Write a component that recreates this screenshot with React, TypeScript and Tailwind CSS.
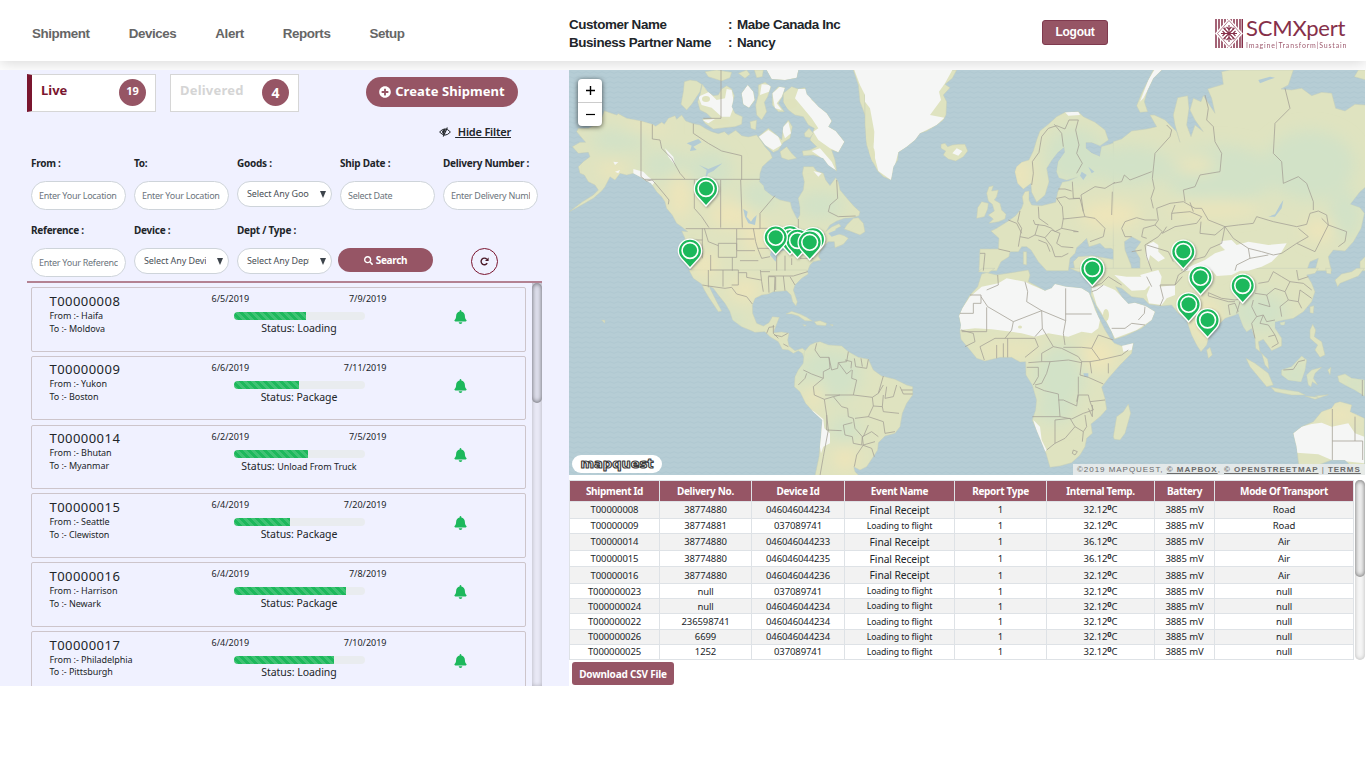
import React from "react";
import { FaPlusCircle, FaSearch, FaBell } from "react-icons/fa";

type Shipment = { id: string; from: string; to: string; start: string; end: string; pct: number; status: string; small?: boolean };

const shipments: Shipment[] = [
  { id: "T00000008", from: "Haifa", to: "Moldova", start: "6/5/2019", end: "7/9/2019", pct: 55, status: "Loading" },
  { id: "T00000009", from: "Yukon", to: "Boston", start: "6/6/2019", end: "7/11/2019", pct: 50, status: "Package" },
  { id: "T00000014", from: "Bhutan", to: "Myanmar", start: "6/2/2019", end: "7/5/2019", pct: 57, status: "Unload From Truck", small: true },
  { id: "T00000015", from: "Seattle", to: "Clewiston", start: "6/4/2019", end: "7/20/2019", pct: 43, status: "Package" },
  { id: "T00000016", from: "Harrison", to: "Newark", start: "6/4/2019", end: "7/8/2019", pct: 86, status: "Package" },
  { id: "T00000017", from: "Philadelphia", to: "Pittsburgh", start: "6/4/2019", end: "7/10/2019", pct: 77, status: "Loading" },
];

const columns = ["Shipment Id", "Delivery No.", "Device Id", "Event Name", "Report Type", "Internal Temp.", "Battery", "Mode Of Transport"];

const rows = [
  ["T00000008", "38774880", "046046044234", "Final Receipt", "1", "32.12", "3885 mV", "Road"],
  ["T00000009", "38774881", "037089741", "Loading to flight", "1", "32.12", "3885 mV", "Road"],
  ["T00000014", "38774880", "046046044233", "Final Receipt", "1", "36.12", "3885 mV", "Air"],
  ["T00000015", "38774880", "046046044235", "Final Receipt", "1", "36.12", "3885 mV", "Air"],
  ["T00000016", "38774880", "046046044236", "Final Receipt", "1", "32.12", "3885 mV", "Air"],
  ["T000000023", "null", "037089741", "Loading to flight", "1", "32.12", "3885 mV", "null"],
  ["T000000024", "null", "046046044234", "Loading to flight", "1", "32.12", "3885 mV", "null"],
  ["T000000022", "236598741", "046046044234", "Loading to flight", "1", "32.12", "3885 mV", "null"],
  ["T000000026", "6699", "046046044234", "Loading to flight", "1", "32.12", "3885 mV", "null"],
  ["T000000025", "1252", "037089741", "Loading to flight", "1", "32.12", "3885 mV", "null"],
];

const gridCols = "grid grid-cols-[90px_92px_93px_110px_92px_108px_60px_139px]";

/* Map sheets: each is drawn at three times the screen scale from its own origin. */
const sheetA = "translate(565 65) scale(.33333)";
const sheetB = "translate(865 65) scale(.33333)";
const sheetC = "translate(1115 65) scale(.33333)";
const sheetD = "translate(565 270) scale(.33333)";
const sheetE = "translate(945 270) scale(.33333)";

const land: [string, string][] = [
  [sheetA, "M118,137 130,142 155,150 160,146 185,160 228,168 262,178 272,184 290,172 298,178 310,160 330,152 335,163 350,150 362,168 385,176 405,180 420,190 440,200 460,206 478,200 490,210 512,196 530,212 550,216 575,210 590,230 600,245 615,262 622,278 608,290 592,305 585,325 583,350 595,362 598,375 620,392 645,405 676,412 680,430 690,450 697,463 705,450 705,425 700,400 715,375 718,350 712,325 716,305 745,305 755,318 775,325 782,345 795,362 812,338 820,352 825,375 850,405 868,425 885,440 882,452 862,458 838,460 815,468 795,480 782,500 800,486 822,476 828,484 812,492 815,505 838,512 850,520 835,538 810,548 808,530 790,530 775,545 765,560 760,575 768,585 745,590 735,600 728,617 380,617 375,605 362,580 355,545 360,520 350,498 368,500 350,485 335,475 322,450 305,430 300,410 290,395 275,380 258,355 240,345 225,335 205,325 185,330 165,325 150,345 135,335 120,365 110,378 85,400 50,420 13,440 50,412 85,390 100,375 90,360 70,350 58,330 45,325 40,305 55,290 75,275 70,262 40,265 22,245 45,232 62,232 50,218 35,200 40,190 70,190 95,178 110,160Z"],
  [sheetA, "M358,50 375,45 395,48 410,58 405,80 395,95 380,118 365,135 348,118 355,80Z"],
  [sheetA, "M412,58 428,80 445,92 460,90 470,72 485,62 500,72 508,92 500,125 510,145 532,155 530,178 510,185 478,188 445,192 420,175 412,162 440,160 425,145 405,135 398,110 405,90Z"],
  [sheetA, "M530,85 548,60 565,80 570,105 552,128 535,118ZM580,60 600,52 618,65 608,95 598,112 605,140 590,165 575,150 572,120 580,90ZM622,85 640,65 660,68 652,95 640,115 658,140 640,140 622,120ZM605,15 700,15 695,38 660,45 620,42ZM520,25 545,15 555,28 540,40ZM568,15 595,15 592,35 575,38ZM420,20 455,15 500,22 495,38 470,48 430,35Z"],
  [sheetA, "M655,85 680,65 700,72 720,68 725,88 745,108 760,125 785,145 800,168 790,185 812,198 838,230 820,262 800,255 810,285 815,318 790,300 775,280 745,270 715,272 712,258 735,255 755,245 735,225 748,190 730,180 715,155 690,150 670,135 655,110Z"],
  [sheetA, "M580,215 610,190 635,210 650,225 655,185 670,165 682,185 675,220 655,232 640,255 625,262 600,240ZM645,260 665,245 680,265 695,280 670,285 650,278ZM718,205 732,190 745,205 735,218 720,215ZM555,170 575,165 572,195 558,190Z"],
  [sheetA, "M845,480 865,460 880,458 895,475 900,500 885,510 860,500 838,492ZM865,15 900,15 900,150 885,110 880,60Z"],
  [sheetB, "M0,15 275,15 262,40 240,58 255,68 235,90 245,110 243,150 235,165 215,180 185,198 165,205 150,225 125,245 100,262 98,285 85,305 78,345 55,335 38,318 20,285 5,240 0,180Z"],
  [sheetB, "M228,238 240,235 248,245 262,240 280,238 300,238 308,258 295,275 272,288 250,282 235,270 242,258 228,250Z"],
  [sheetB, "M372,365 385,362 380,378 400,375 395,395 388,405 405,415 410,435 423,448 420,462 400,470 372,475 385,462 370,450 388,438 382,418 370,408 365,385ZM338,428 350,410 370,415 368,432 358,455 335,460Z"],
  [sheetB, "M450,320 455,305 470,292 492,285 505,258 515,225 525,198 550,178 575,155 600,142 640,140 655,155 690,172 720,195 730,225 705,242 680,232 662,232 662,250 680,265 705,275 710,245 735,238 755,230 755,617 755,560 738,550 720,550 705,535 690,540 672,545 665,520 650,535 635,548 630,565 615,580 610,617 545,617 520,590 498,555 485,545 470,545 460,560 435,560 432,575 408,590 395,617 342,617 345,552 400,552 402,520 378,498 395,490 430,468 452,452 470,430 475,415 472,395 480,380 492,378 492,405 500,420 530,422 572,412 578,382 592,352 612,348 640,335 605,345 582,338 575,320 580,290 600,262 598,245 578,262 560,285 545,310 552,350 540,390 515,412 500,382 498,355 475,372 458,355Z"],
  [sheetB, "M475,560 485,560 485,600 475,598ZM625,590 640,575 680,572 755,585 755,617 630,617Z"],
  [sheetC, "M-5,230 20,222 50,198 95,192 125,185 105,150 118,150 150,165 165,180 185,200 195,232 180,180 175,150 188,98 218,92 222,130 215,180 228,215 240,180 265,200 240,165 225,135 235,100 258,110 265,92 300,145 290,100 278,72 325,58 320,20 345,15 535,15 520,60 498,72 530,75 560,70 590,92 620,82 650,85 662,130 690,138 720,118 753,120 753,365 735,380 705,418 735,428 748,445 738,490 715,530 690,558 655,555 640,575 645,600 650,617 600,617 610,580 585,590 575,617 75,617 75,580 60,555 78,530 50,515 28,530 30,555 48,600 50,617 -5,617Z"],
  [sheetC, "M65,122 80,85 100,45 115,15 140,15 115,40 98,75 88,110 98,140 75,142ZM718,35 730,15 753,15 753,45ZM735,590 750,575 753,617 735,617Z"],
  [sheetD, "M372,0 385,25 410,42 418,60 430,80 440,95 460,125 470,123 455,95 440,65 432,48 445,55 460,75 480,100 495,125 503,150 530,170 570,187 600,185 615,200 640,215 652,238 670,240 685,250 700,242 712,250 718,265 725,245 712,235 690,242 672,228 668,210 672,190 650,186 625,188 632,170 643,142 622,140 612,158 595,168 575,160 563,130 562,105 570,85 590,75 610,72 625,65 665,62 678,75 683,95 693,108 697,95 685,60 690,45 710,25 730,12 725,0Z"],
  [sheetD, "M718,245 735,225 750,218 765,215 790,225 830,228 850,245 880,262 910,268 925,300 950,318 990,328 1025,345 1043,350 1043,375 1025,400 1012,430 1005,470 990,490 960,498 940,518 938,540 925,560 905,590 885,600 866,590 870,605 882,617 750,617 762,560 768,500 772,450 745,425 722,400 705,365 688,350 690,320 700,300 715,280Z"],
  [sheetD, "M663,132 680,124 705,132 725,142 742,153 720,152 700,138 680,132ZM748,155 765,152 785,160 782,167 755,165ZM713,164 724,165 720,169ZM795,164 804,164 804,168ZM110,150 120,151 119,160Z"],
  [sheetE, "M110,12 125,8 155,15 200,8 250,0 255,15 250,35 275,48 300,62 320,55 330,42 362,50 410,55 432,68 445,100 460,140 480,180 495,205 508,220 530,228 565,220 560,250 525,285 490,325 470,352 480,385 485,418 465,440 438,462 442,490 425,505 420,530 405,555 380,578 345,588 315,592 303,550 285,505 262,450 272,420 275,390 262,345 243,315 242,275 225,276 200,262 165,262 120,273 95,265 75,240 48,208 45,185 48,165 42,138 52,115 75,75 98,50Z"],
  [sheetE, "M100,5 112,-5 150,-5 130,8ZM505,500 515,440 535,425 550,402 557,430 540,490 525,510 508,508ZM785,240 795,232 802,255 790,265Z"],
  [sheetE, "M375,-5 400,5 440,10 440,50 438,75 455,110 480,150 500,185 508,208 540,198 590,175 620,150 630,125 602,108 570,98 550,102 530,80 512,50 530,55 560,80 595,85 612,103 650,108 680,105 700,130 725,150 740,195 755,225 768,245 785,225 792,195 810,175 840,145 870,135 880,130 895,170 905,185 920,175 930,205 932,235 950,250 960,285 972,298 968,268 945,245 940,215 955,208 980,242 1010,228 1010,205 990,175 990,155 1015,150 1045,145 1075,125 1100,95 1110,65 1100,40 1085,15 1110,10 1120,-5Z"],
  [sheetE, "M903,265 930,280 970,310 985,345 965,350 940,320 915,290ZM978,352 1010,358 1060,365 1080,375 1040,375 990,365ZM1010,300 1040,290 1070,258 1085,270 1080,300 1068,335 1030,330 1010,315ZM1085,315 1100,300 1130,292 1110,310 1105,325 1118,345 1102,335 1098,350 1090,345ZM1095,180 1103,163 1112,180 1108,200 1130,215 1140,255 1125,262 1110,240 1118,225 1095,205ZM1095,110 1107,107 1105,130 1095,128ZM1005,158 1020,155 1018,165 1008,165ZM1080,378 1120,382 1110,378 1150,374 1110,388ZM1178,318 1200,312 1220,325 1258,330 1258,378 1230,360 1200,345 1182,335ZM1148,300 1158,292 1155,315Z"],
  [sheetE, "M1045,490 1070,470 1105,455 1130,425 1160,415 1170,400 1185,395 1220,405 1215,425 1258,445 1258,617 1230,600 1200,570 1160,570 1120,585 1125,617 1065,617 1060,575 1055,530ZM1142,-5 1158,-5 1158,12 1145,10ZM1170,30 1190,12 1220,5 1235,-5 1258,-5 1240,18 1210,30 1185,40 1178,50Z"],
];

const snow: [string, string][] = [
  [sheetB, "M0,15 262,15 240,55 222,80 228,105 195,150 238,158 215,180 165,205 150,225 125,245 100,262 90,300 78,345 40,318 25,260 28,200 15,130 0,110Z"],
  [sheetA, "M868,15 900,15 900,90 885,60ZM605,15 700,15 695,38 660,45 620,42ZM412,58 430,82 400,95 410,120 440,128 470,155 495,155 508,120 500,75 485,72 480,100 455,105 440,90ZM530,85 548,60 565,80 568,105 552,128 535,118ZM590,58 618,60 612,80 585,90ZM622,85 645,65 660,68 650,95 635,115 650,135 630,130ZM700,72 722,72 740,105 785,145 800,168 790,185 812,198 838,230 820,262 795,250 760,225 745,200 760,190 740,160 715,130 690,100ZM582,215 610,195 640,215 650,240 625,255 600,240ZM650,190 670,170 678,205 660,220ZM740,258 765,250 800,290 812,315 785,300 765,275ZM412,165 450,162 430,175ZM205,312 235,320 250,335 270,350 260,362 235,340 205,330ZM300,250 325,275 330,300 310,275ZM745,318 770,325 760,335ZM145,290 160,292 150,300ZM150,320 165,315 160,325Z"],
  [sheetC, "M75,110 100,45 118,15 140,15 115,40 98,75 85,100ZM95,540 115,530 130,540 130,560 150,580 130,590 105,570 100,595 92,570ZM320,528 350,525 365,540 400,530 460,540 515,535 500,560 470,590 440,605 400,617 200,617 235,600 270,585 300,565 330,555 315,540Z"],
  [sheetB, "M262,265 275,250 292,258 280,272ZM600,142 640,140 645,150 610,152Z"],
  [sheetE, "M75,80 110,50 160,40 185,25 240,35 260,45 300,62 330,42 410,55 432,68 450,120 465,150 460,175 440,190 410,185 370,200 310,190 270,200 230,190 200,185 140,178 90,175 45,180 48,160 42,138 52,115ZM440,55 475,45 510,60 540,90 570,98 602,108 630,125 620,150 575,180 510,205 500,185 480,145 455,105ZM508,15 545,20 600,20 615,45 600,60 560,62 535,40ZM585,15 640,0 650,20 645,50 690,45 690,75 665,85 650,105 612,100 605,75 615,50ZM800,0 850,-5 900,-5 860,15 815,18ZM530,222 565,218 560,240 535,245ZM265,450 285,470 290,510 305,540 300,545 280,500ZM1045,490 1070,470 1100,462 1130,458 1160,470 1210,460 1230,490 1258,500 1258,580 1215,575 1160,570 1120,553 1055,548Z"],
  [sheetD, "M724,410 748,425 775,448 778,475 795,490 795,520 775,530 768,550 764,525 770,455ZM1185,140 1200,110 1200,170 1187,170Z"],
];

const water: [string, string][] = [
  [sheetA, "M365,235 400,222 410,232 385,245 395,255 375,258 380,242ZM402,300 430,312 472,295 445,318 430,325 420,345 425,315ZM535,432 548,440 545,455 558,470 565,460 575,450 570,480 550,475 540,455ZM615,570 622,545 640,540 660,545 660,555 640,560 632,590ZM790,505 830,488 845,500 800,515Z"],
  [sheetC, "M460,455 480,448 495,420 505,405 500,430 480,455ZM430,45 465,35 480,38 460,45 435,55Z"],
  [sheetB, "M650,320 665,330 655,345 645,332ZM670,305 688,320 680,325Z"],
  [sheetE, "M415,310 430,310 430,322 418,320Z"],
];

const borders: [string, string][] = [
  [sheetA, "M228,168V335L245,348 262,345 275,360 300,390 312,405 310,418M262,178V222L285,225 290,250 320,280 345,325 360,342M240,343H585M385,176V205L430,235 470,258 530,272 530,345M388,343V430L410,455 432,488M467,345V488M527,345 532,488M362,491H585V445L630,392M412,490V525H365M418,490 430,530 460,542M460,535H515V577H460ZM515,492V555M515,522H568M515,557H570M565,490 572,530 578,550H620M437,617V570M412,525V580M502,577V617M525,587H580M468,15V160H415M585,490H605L690,500 720,520 780,508M578,550 590,580 615,575M635,575V617M660,572V617M680,580V600M705,580 745,580M815,345 818,400 795,420 790,440 820,455 872,453M700,462V495"],
  [sheetB, "M500,360 505,325 502,290 522,262 530,215 550,190 575,182 600,192 612,165 640,165 632,195 642,240 635,265 652,295 635,325M568,178 590,205 595,245M622,350 625,400 645,400 655,440 660,455 595,462 592,425 575,400 600,395 612,402 645,400M595,460 590,490 570,500 560,490 540,482 510,478 505,465M520,425 522,460 550,480M590,490 640,500 625,500M465,438 458,470 470,490 465,515 460,545M430,465 455,475 470,505M465,515 490,520 510,510 520,478M510,510 540,518 560,495 585,505 575,535 590,545 625,548M540,518 560,545 570,575 590,575 610,565M520,525 545,535 555,560M400,552 435,560M345,565 360,565 355,617M660,455 690,460 720,490 715,515 675,530M648,390 690,365 720,370 750,352M742,380 740,450M655,440 648,390M580,372 600,372 620,378"],
  [sheetC, "M110,617 95,575 90,540 130,515 142,500 120,480 130,465 125,430 165,415 205,410 240,430 260,430 280,465 330,485 370,480 415,475 425,455 475,470 545,485 575,478 585,445 610,438 635,450 640,480 695,500 690,530 670,545M330,485 355,520 400,550 440,560 475,570 500,565 545,535 580,515 550,490M20,490 30,470 65,458 90,465 125,465M20,490 30,515 50,515M120,480 85,490 80,515 95,520M142,505 180,485 245,475 260,455 225,440 170,445 170,465M225,412 235,440M170,445 180,420M258,470 255,505 300,510 330,485M155,485 142,505M330,485 320,535 285,550 270,575 215,590 200,617M95,540 160,560M50,560 80,555M160,560 175,590M400,550 405,580 365,600 360,617M405,580 460,570M115,430 108,400 118,370 112,340 120,265 165,215 170,195 155,180M-5,355 20,350 28,330 45,345 110,320M270,90 280,130 275,165 295,185 300,230 320,265 315,320 255,330 240,365 205,375 210,410M510,70 525,130 480,175 475,265 500,290 505,355 550,335 575,355 595,410 595,435M620,460 640,480M545,535 600,560 640,480"],
  [sheetD, "M412,45 430,48 480,55 500,52 515,72 545,80 562,102M430,0V52M474,0V50M435,0H520V45H500M520,8 545,8V22L588,30M586,0 590,35 595,65M612,68 610,20 630,20 628,65M632,20V60M655,18 660,62M675,20 690,45M610,18 685,18 728,5M588,5H615M605,190 612,172 628,170M625,165V190L640,205M628,195 650,200 668,190M655,222 670,230M755,220 750,240 765,262 792,262 795,295 775,305 775,325 740,312 715,300M792,262 800,300 818,295 820,278 845,275 850,245M840,270 860,275 858,295M868,265 872,290 905,295M888,265 892,290M910,268 905,295M700,345 720,325 725,310M775,325 745,350 748,375 778,388 805,380 825,375M778,388 785,435 790,480 775,560 765,617M785,435 785,480 830,482M805,380 830,410 848,415 850,440 865,445 870,475 892,500 890,525 865,520 862,500 840,495 835,465 862,458M862,300 860,325 875,330 865,375 922,382 940,370 955,318M820,278 845,312 860,300M780,375 865,375M922,382 925,408 952,410 955,375M940,370 955,345M952,410 955,425 1002,430M925,408 910,440 955,455M910,440 870,445M955,455 960,490 990,485M910,465 895,500M965,350 960,385 985,380 995,345M1005,350 1015,372 1043,372M1010,360H1043M892,500 920,485 940,500M895,525 875,555 868,590M892,525 920,535 928,560M892,500 895,525 930,515"],
  [sheetE, "M75,75H108V100H85V130H45M108,80 128,110 205,155 290,122 245,95 248,65 240,35M125,112V185H50M290,122 362,152V55M362,132H440M158,15 160,45 125,60M205,155 200,180 180,205 150,205 105,230M290,122 292,175 270,200M362,152 355,190 360,225M48,180 85,190 90,215 60,230M105,230 118,270M155,225V265M175,220V262M188,205V262M180,205H270L280,230 240,262M292,175 325,230 290,250 290,275 250,278M325,230 350,235 400,260 410,275M355,232 410,232 440,235 460,195 505,210M440,235 465,270 530,255 550,240M465,270 435,275 410,275 405,315 430,322 475,342M435,275 440,310M490,280V310M290,275 315,275 305,310 290,340 270,345M315,275 370,270 410,278M400,320 400,370 395,395M245,292H280V320L265,345M270,350 298,362 340,372 345,440 262,440M340,390H355L395,408 400,375 430,375 435,395 480,390M345,440 380,447 415,430 445,420 435,395M330,450V520L305,540M330,450 375,445 390,470 360,505 330,520M390,470 415,485 425,470 420,435M415,485 412,515M442,405V440L430,415M382,550 385,540 397,545 390,555ZM440,52 470,40 490,20 530,45M440,65 455,60 475,45M500,175 540,175 560,160 600,165M600,110 598,130 580,150M605,20 620,50M645,45 690,45 700,15 730,-5M645,45 655,85 645,108M690,45 712,20M790,68 830,85 870,90 890,85M790,68V78L850,95 870,95M850,105 870,100 880,125M850,105 855,135M885,95 875,130M925,90 920,110 935,140 955,135 965,155 990,150M935,140 920,160 930,205M955,135 945,160 970,165 990,195 970,200M990,195 1000,220 980,232M1015,300 1045,298 1060,275 1080,270M1162,417V570M1230,440V513M1162,513H1253V570M1252,330V378"],
  [sheetE, "M930,70 965,75 990,55 1020,65 1030,90 1060,95 1070,115M940,40 970,35 985,5M1020,65 1035,35 1075,40 1100,60M1030,90 1005,110 1010,140M1055,0 1060,30 1090,20M965,75 975,110 940,100M985,5 1010,20 1035,35M1060,95 1065,60 1100,85"],
];

const pins: [number, number][] = [
  [706, 188.5], [690, 250.5], [790, 237], [813, 239], [797.5, 240.5], [775.7, 237.3], [809.7, 242.3],
  [1092.3, 268.5], [1183.3, 251.5], [1200.5, 277.3], [1242.7, 285.5], [1188.6, 304.3], [1207.6, 320],
];

function WorldMap() {
  return (
    <svg className="block h-full w-full" viewBox="569 70 796 405" preserveAspectRatio="none">
      <defs>
        <pattern id="waves" width="8" height="5" patternUnits="userSpaceOnUse">
          <rect width="8" height="5" fill="#b6cdd5" />
          <path d="M0,2.5Q2,1 4,2.5T8,2.5" fill="none" stroke="#b0c8d2" strokeWidth="1" />
        </pattern>
        <clipPath id="landClip">
          {land.map(([t, d], i) => <path key={i} transform={t} d={d} />)}
        </clipPath>
        <filter id="soft" x="-10%" y="-10%" width="120%" height="120%"><feGaussianBlur stdDeviation="8" /></filter>
        <filter id="pinShadow" x="-10%" y="-10%" width="120%" height="120%"><feDropShadow dx="1" dy="1" stdDeviation="1.2" floodColor="#555" floodOpacity=".55" /></filter>
      </defs>
      <rect x="569" y="70" width="796" height="405" fill="url(#waves)" />
      <g fill="#dfe3c0" stroke="#c6cfb8" strokeWidth="1.5">{land.map(([t, d], i) => <path key={i} transform={t} d={d} />)}</g>
      <g clipPath="url(#landClip)">
        <g filter="url(#soft)">
          <g fill="#d2e2c7">
            <ellipse cx="620" cy="140" rx="30" ry="12" /><ellipse cx="665" cy="165" rx="25" ry="14" />
            <ellipse cx="710" cy="170" rx="22" ry="20" /><ellipse cx="760" cy="195" rx="20" ry="14" />
            <ellipse cx="820" cy="205" rx="25" ry="14" /><ellipse cx="830" cy="375" rx="32" ry="26" />
            <ellipse cx="845" cy="430" rx="16" ry="14" /><ellipse cx="1060" cy="375" rx="26" ry="30" />
            <ellipse cx="1055" cy="410" rx="20" ry="14" /><ellipse cx="1075" cy="155" rx="30" ry="28" />
            <ellipse cx="1130" cy="165" rx="40" ry="20" /><ellipse cx="1220" cy="175" rx="55" ry="30" />
            <ellipse cx="1310" cy="165" rx="45" ry="35" /><ellipse cx="1345" cy="215" rx="16" ry="25" />
            <ellipse cx="1260" cy="312" rx="28" ry="20" /><ellipse cx="1295" cy="375" rx="14" ry="14" />
            <ellipse cx="730" cy="322" rx="12" ry="8" /><ellipse cx="1355" cy="385" rx="12" ry="10" />
          </g>
          <g fill="#efe5b9">
            <ellipse cx="645" cy="127" rx="24" ry="4" /><ellipse cx="612" cy="170" rx="14" ry="6" />
            <ellipse cx="680" cy="195" rx="10" ry="24" /><ellipse cx="730" cy="215" rx="20" ry="12" />
            <ellipse cx="755" cy="235" rx="10" ry="18" /><ellipse cx="705" cy="265" rx="12" ry="12" />
            <ellipse cx="745" cy="290" rx="15" ry="10" /><ellipse cx="1110" cy="215" rx="30" ry="12" />
            <ellipse cx="1020" cy="175" rx="9" ry="16" /><ellipse cx="1195" cy="165" rx="20" ry="7" />
            <ellipse cx="1215" cy="208" rx="45" ry="7" /><ellipse cx="1098" cy="355" rx="18" ry="16" />
            <ellipse cx="1205" cy="320" rx="14" ry="20" /><ellipse cx="1320" cy="230" rx="16" ry="10" />
            <ellipse cx="1010" cy="350" rx="35" ry="5" /><ellipse cx="1340" cy="415" rx="20" ry="8" />
            <ellipse cx="815" cy="395" rx="8" ry="14" /><ellipse cx="845" cy="458" rx="12" ry="12" />
          </g>
        </g>
        <g fill="#f5f6f5">{snow.map(([t, d], i) => <path key={i} transform={t} d={d} />)}</g>
        <g fill="#dfe2bd">
          <ellipse cx="790" cy="104" rx="7" ry="5" /><ellipse cx="706" cy="99" rx="4" ry="3" /><ellipse cx="721" cy="122" rx="9" ry="3" />
          <ellipse cx="870" cy="137" rx="4" ry="10" /><ellipse cx="872" cy="155" rx="3" ry="8" /><ellipse cx="1020" cy="327" rx="2" ry="1.5" /><ellipse cx="1106" cy="315" rx="3" ry="6" />
        </g>
      </g>
      <g fill="#b3cbd4">{water.map(([t, d], i) => <path key={i} transform={t} d={d} />)}</g>
      <g fill="none" stroke="#a6a297" strokeWidth="0.8" strokeLinejoin="round">
        {borders.map(([t, d], i) => <path key={i} transform={t} d={d} vectorEffect="non-scaling-stroke" />)}
      </g>
      <g filter="url(#pinShadow)">
        {pins.map(([x, y], i) => (
          <g key={i} transform={`translate(${x} ${y})`}>
            <path d="M0,17.5 -8.4,8.2A11.6,11.6 0 1 1 8.4,8.2Z" fill="#1db85c" stroke="#fff" strokeWidth="1.3" />
            <circle r="7.9" fill="#1db85c" stroke="#fff" strokeWidth="1.6" />
          </g>
        ))}
      </g>
    </svg>
  );
}

function Logo() {
  return (
    <div className="flex items-start gap-[3px] text-[#86304a]">
      <svg className="mt-[1px] h-[29px] w-[28px]" viewBox="0 0 28 29">
        <g stroke="#86304a" strokeWidth="1.5">
          {[1, 4, 7, 10, 13, 16, 19, 22, 25, 27.3].map((x) => <path key={x} d={`M${x},0V29`} />)}
        </g>
        <path d="M14,-1 28,14.5 14,30 0,14.5Z" fill="#fff" />
        <path d="M14,1.5 25.5,14.5 14,27.5 2.5,14.5Z" fill="none" stroke="#86304a" strokeWidth=".6" />
        <g fill="none" stroke="#86304a" strokeWidth="1.1">
          <path d="M14,6V23M6,14.5H22M8.5,9 19.5,20M19.5,9 8.5,20" />
          <path d="M11.5,8 14,10.5 16.5,8M11.5,21 14,18.5 16.5,21M7.5,12 10,14.5 7.5,17M20.5,12 18,14.5 20.5,17" />
          <path d="M10,10.5V8.5M18,10.5V8.5M10,18.5V20.5M18,18.5V20.5" />
        </g>
      </svg>
      <div className="font-['Lato']">
        <div className="h-[23px] text-[22px] leading-[20px] tracking-[-0.22px]">SCMXpert</div>
        <div className="h-[8px] text-[7px] leading-[8px] tracking-[0.82px] whitespace-nowrap opacity-80">Imagine|Transform|Sustain</div>
      </div>
    </div>
  );
}

function Field({ label, text, select }: { label: string; text: string; select?: boolean }) {
  return (
    <div className="w-[95px]">
      <div className="h-[26px] pt-[1px] text-[10px] leading-[15px] font-bold tracking-[-0.25px] whitespace-nowrap text-[#212529]">{label}</div>
      {select ? (
        <div className="flex h-[26px] items-center rounded-full border border-[#ced4da] bg-white pr-[5px] pl-[9px] text-[9px] tracking-[-0.1px] text-[#495057]">
          <span className="w-[62px] overflow-hidden whitespace-nowrap">{text}</span>
          <svg className="ml-auto h-[7px] w-[6px]" viewBox="0 0 6 7"><path d="M0,0H6L3,7Z" fill="#3d444b" /></svg>
        </div>
      ) : (
        <div className="flex h-[29px] items-center rounded-full border border-[#ced4da] bg-white px-[7px] text-[9px] tracking-[-0.27px] text-[#6c757d]">
          <span className="w-full overflow-hidden whitespace-nowrap">{text}</span>
        </div>
      )}
    </div>
  );
}

function ShipmentCard({ s }: { s: Shipment }) {
  return (
    <div className="flex h-[64.5px] w-[495px] shrink-0 rounded-[2px] border border-[#cdc5cb] pl-[17.5px]">
      <div className="w-[162px] shrink-0 pt-[3.6px] text-[#212529]">
        <div className="text-[13px] leading-[18px] tracking-[0.45px]">{s.id}</div>
        <div className="text-[9px] leading-[12.9px] tracking-[-0.06px]">From :- {s.from}</div>
        <div className="text-[9px] leading-[12.9px] tracking-[-0.06px]">To :- {s.to}</div>
      </div>
      <div className="w-[175px] shrink-0 pt-[5px]">
        <div className="flex justify-between text-[9px] leading-[12px]"><span>{s.start}</span><span>{s.end}</span></div>
        <div className="mt-[7px] ml-[22px] h-[8px] w-[131px] overflow-hidden rounded-full bg-[#e9ecef]">
          <div className="h-full bg-[#1db85c] bg-[linear-gradient(45deg,rgba(255,255,255,.15)_25%,transparent_25%,transparent_50%,rgba(255,255,255,.15)_50%,rgba(255,255,255,.15)_75%,transparent_75%,transparent)] bg-[length:8px_8px]" style={{ width: `${s.pct}%` }} />
        </div>
        <div className="text-center text-[10.5px] leading-[17px] tracking-[-0.05px] whitespace-nowrap">Status: <span className={s.small ? "text-[9px]" : ""}>{s.status}</span></div>
      </div>
      <div className="pt-[22px] pl-[67.5px]"><FaBell className="h-[14px] w-[13px] text-[#1db85c]" /></div>
    </div>
  );
}

export default function App() {
  return (
    <div className="h-[768px] w-[1366px] overflow-hidden bg-white font-['Noto_Sans',sans-serif] text-[#212529]">
      <header className="relative flex h-[61px] bg-white font-['Liberation_Sans',sans-serif] shadow-[0_2px_14px_rgba(0,0,0,0.16)]">
        <nav className="flex w-[569px] gap-[39px] pt-[25px] pl-[32px] text-[13.4px] leading-[18px] font-bold tracking-[-0.42px] text-[#666]">
          {["Shipment", "Devices", "Alert", "Reports", "Setup"].map((n) => <span key={n}>{n}</span>)}
        </nav>
        <div className="grid w-[473px] grid-cols-[159px_9px_1fr] content-start pt-[16px] text-[13.4px] leading-[18px] font-bold tracking-[-0.4px] whitespace-nowrap">
          <span>Customer Name</span><span>:</span><span>Mabe Canada Inc</span>
          <span>Business Partner Name</span><span>:</span><span>Nancy</span>
        </div>
        <div className="w-[173px] pt-[20px]">
          <div className="flex h-[25px] w-[66px] items-center justify-center rounded-[3px] border border-[#7f3a4e] bg-[#965565] pb-[1px] text-[12px] font-bold tracking-[-0.3px] text-white">Logout</div>
        </div>
        <div className="pt-[18px]"><Logo /></div>
      </header>
      <main className="relative mt-[9px] flex">
        <section className="h-[616px] w-[569px] overflow-hidden bg-[#f0f1ff] pl-[27px]">
          <div className="flex pt-[4px]">
            <div className="flex h-[38px] w-[129px] justify-between border border-l-[5px] border-[#d6d6d6] border-l-[#7a152f] bg-white pr-[9px] pl-[9px]">
              <span className="pt-[5px] text-[13px] leading-[20px] font-bold text-[#7a152f]">Live</span>
              <span className="mt-[4px] flex h-[27px] w-[27px] items-center justify-center rounded-full bg-[#965565] pb-[2px] text-[11px] font-bold text-white">19</span>
            </div>
            <div className="ml-[14px] flex h-[38px] w-[129px] justify-between border border-[#d6d6d6] bg-white pr-[9px] pl-[9px]">
              <span className="pt-[5px] text-[13px] leading-[20px] font-bold tracking-[0.2px] text-[#d5d5d5]">Delivered</span>
              <span className="mt-[4px] flex h-[27px] w-[27px] items-center justify-center rounded-full bg-[#965565] text-[14px] font-bold text-white">4</span>
            </div>
            <div className="mt-[3px] ml-[67px] flex h-[30px] w-[152px] items-center justify-center gap-[4px] rounded-full bg-[#965565] text-[13px] font-bold tracking-[0.08px] whitespace-nowrap text-white">
              <FaPlusCircle className="h-[12px] w-[12px]" />Create Shipment
            </div>
          </div>
          <div className="mt-[12px] flex h-[16px] w-[484px] items-center justify-end gap-[4px] text-[11px] font-semibold tracking-[-0.2px] whitespace-pre">
            <svg className="h-[10px] w-[12px]" viewBox="0 0 12 10" fill="none" stroke="#212529">
              <path d="M.6,5Q6,-1.2 11.4,5Q6,11.2 .6,5Z" strokeWidth="1" />
              <path d="M6.2,2.4A2.6,2.6 0 0 0 4.4,7Z" fill="#212529" strokeWidth=".8" />
              <path d="M8.4,.6 4.2,9.4" strokeWidth="1.1" />
            </svg>
            <span className="underline"> Hide Filter</span>
          </div>
          <div className="mt-[15px] ml-[4px] flex gap-[8px]">
            <Field label="From :" text="Enter Your Location" />
            <Field label="To:" text="Enter Your Location" />
            <Field label="Goods :" text="Select Any Goods" select />
            <Field label="Ship Date :" text="Select Date" />
            <Field label="Delivery Number :" text="Enter Delivery Number" />
          </div>
          <div className="mt-[12px] ml-[4px] flex h-[59px] gap-[8px]">
            <Field label="Reference :" text="Enter Your Reference" />
            <Field label="Device :" text="Select Any Device" select />
            <Field label="Dept / Type :" text="Select Any Dept" select />
            <div className="mt-[26px] -ml-[2px] flex h-[24px] w-[95px] items-center justify-center gap-[3px] rounded-full bg-[#965565] text-[10px] font-bold tracking-[-0.35px] text-white">
              <FaSearch className="h-[9px] w-[9px]" />Search
            </div>
            <div className="mt-[26px] ml-[30px] flex h-[27px] w-[27px] items-center justify-center rounded-full border border-[#7a152f]">
              <svg className="h-[9px] w-[9px]" viewBox="0 0 9 9">
                <path d="M7.2,6.2A3.3,3.3 0 1 1 6.8,2.2" fill="none" stroke="#4a1a28" strokeWidth="1.4" />
                <path d="M8.6,.4V4H5Z" fill="#4a1a28" />
              </svg>
            </div>
          </div>
          <div className="h-[2px] w-[515px] bg-[#b38292]" />
          <div className="flex h-[403px] w-[515px] justify-between overflow-hidden">
            <div className="flex flex-col gap-[4.3px] pt-[4px] pl-[4px]">
              {shipments.map((s) => <ShipmentCard key={s.id} s={s} />)}
            </div>
            <div className="h-full w-[10px] bg-[#e9e9f6] shadow-[inset_0_0_4px_rgba(0,0,0,0.25)]">
              <div className="h-[120px] w-[10px] rounded-[5px] bg-[#e0e1ee] shadow-[inset_0_0_5px_rgba(0,0,0,0.6)]" />
            </div>
          </div>
        </section>
        <section className="w-[797px]">
          <div className="relative h-[405px] w-[796px] overflow-hidden">
            <WorldMap />
            <div className="absolute top-[9px] left-[9px] w-[24px] rounded-[4px] bg-white shadow-[0_1px_5px_rgba(0,0,0,0.65)]">
              <div className="flex h-[24px] items-center justify-center border-b border-[#ccc]"><svg width="9" height="9" viewBox="0 0 9 9"><path d="M0,4.5H9M4.5,0V9" stroke="#000" strokeWidth="1.4" /></svg></div>
              <div className="flex h-[23px] items-center justify-center"><svg width="9" height="9" viewBox="0 0 9 9"><path d="M0,4.5H9" stroke="#000" strokeWidth="1.2" /></svg></div>
            </div>
            <div className="absolute bottom-[2px] left-[3px] flex h-[18px] w-[90px] items-center justify-center rounded-full bg-white">
              <svg width="78" height="17" viewBox="0 0 78 17">
                <text x="2.5" y="11.5" textLength="73" lengthAdjust="spacingAndGlyphs" fontFamily="DejaVu Sans" fontWeight="bold" fontSize="12" fill="#fff" stroke="#3a3a3a" strokeWidth="1.1" strokeLinejoin="round">mapquest</text>
              </svg>
            </div>
            <div className="absolute right-0 bottom-0 h-[11px] w-[292px] bg-[#e8ebeb]/90 pl-[4px] font-['Liberation_Sans'] text-[8px] leading-[11px] tracking-[0.96px] whitespace-nowrap text-[#6b6b6b]">
              ©2019 MAPQUEST, <span className="font-bold underline">© MAPBOX</span>, <span className="font-bold underline">© OPENSTREETMAP</span> | <span className="font-bold underline">TERMS</span>
            </div>
          </div>
          <div className="flex h-[185px] pt-[5px]">
            <div className="w-[785px] border-t border-l border-[#dee2e6]">
              <div className={`${gridCols} h-[21px] bg-[#965565] text-[10px] font-bold tracking-[-0.32px] text-white`}>
                {columns.map((c) => <div key={c} className="flex items-center justify-center border-r border-b border-[#dee2e6] whitespace-nowrap">{c}</div>)}
              </div>
              {rows.map((r, i) => (
                <div key={r[0]} className={`${gridCols} ${r[3] === "Final Receipt" ? "h-[16.8px]" : "h-[15.1px]"} ${i % 2 ? "bg-white" : "bg-[#f2f2f2]"} text-[9.5px] leading-[12px] tracking-[-0.1px]`}>
                  {r.map((c, j) => (
                    <div key={j} className={`flex items-center justify-center border-r border-b border-[#dee2e6] whitespace-nowrap ${j === 3 ? (c === "Final Receipt" ? "text-[10.3px]" : "text-[8.7px]") : "pt-[1px]"}`}>
                      {j === 5 ? <>{c}<span className="relative -top-[3px] text-[7.5px] font-bold">0</span>C</> : c}
                    </div>
                  ))}
                </div>
              ))}
            </div>
            <div className="ml-[1px] h-[180px] w-[10px] rounded-[5px] bg-[#f6f6f6] shadow-[inset_0_0_4px_rgba(0,0,0,0.25)]">
              <div className="h-[97px] w-[10px] rounded-[5px] bg-[#f0f0f0] shadow-[inset_0_0_5px_rgba(0,0,0,0.6)]" />
            </div>
          </div>
          <div className="mt-[2px] ml-[3px] flex h-[23px] w-[102px] items-center justify-center rounded-[3px] bg-[#965565] pt-[1px] text-[10px] font-bold tracking-[-0.2px] whitespace-nowrap text-white">Download CSV File</div>
        </section>
      </main>
    </div>
  );
}
